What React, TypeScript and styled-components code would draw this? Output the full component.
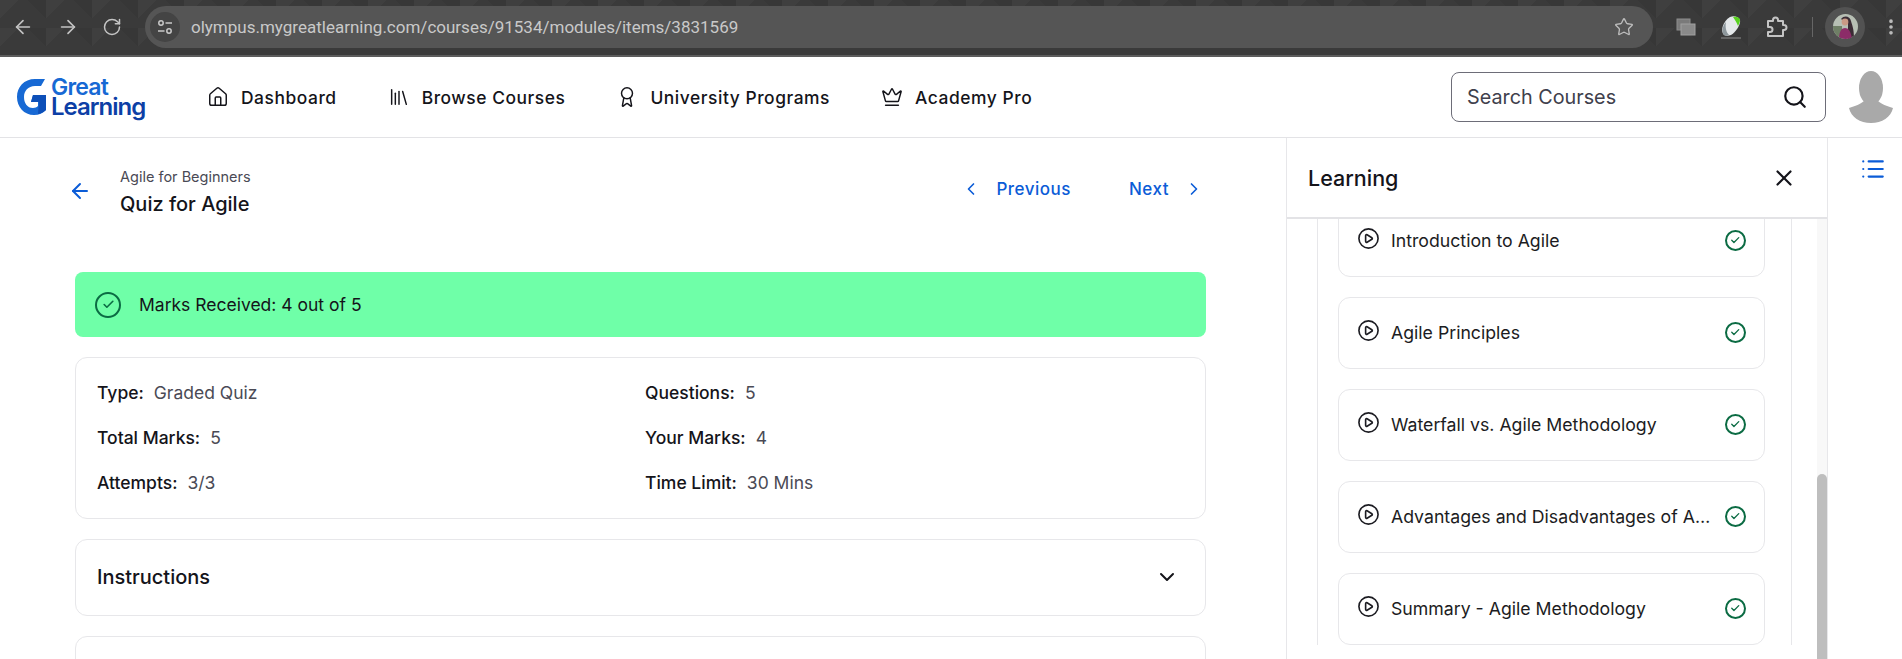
import styled, { createGlobalStyle } from 'styled-components';
import {
  ArrowLeft,
  ArrowRight,
  Award,
  Check,
  ChevronDown,
  ChevronLeft,
  ChevronRight,
  CirclePlay,
  Crown,
  EllipsisVertical,
  House,
  Library,
  List,
  RotateCw,
  Search,
  Star,
  X,
} from 'lucide-react';

const GlobalStyle = createGlobalStyle`
  * { box-sizing: border-box; }
  html, body { margin: 0; padding: 0; background: #fff; }
  body { font-family: Inter, "Liberation Sans", sans-serif; color: #14141a; overflow: hidden; }
`;

const Page = styled.div`
  height: 659px;
  display: flex;
  flex-direction: column;
  overflow: hidden;
`;

const BrowserBar = styled.div`
  height: 57px;
  flex: none;
  display: flex;
  align-items: center;
  padding: 0 14px 2px 12px;
  background-color: #3a3a3a;
  background-image:
    linear-gradient(135deg, rgba(255, 255, 255, 0.025) 25%, transparent 25%),
    linear-gradient(225deg, rgba(0, 0, 0, 0.06) 25%, transparent 25%);
  background-size: 46px 28px;
  border-bottom: 2px solid #5c5c5c;
`;

const NavIcons = styled.div`
  display: flex;
  align-items: center;
  gap: 23px;
  color: #c4c4c4;
  margin-right: 23px;
`;

const AddressBar = styled.div`
  width: 1508px;
  height: 42px;
  flex: none;
  display: flex;
  align-items: center;
  padding: 0 19px 0 5px;
  border-radius: 21px;
  background: #555555;
  color: #c9c9c9;
`;

const SiteBadge = styled.span`
  width: 30px;
  height: 30px;
  border-radius: 50%;
  background: #444444;
  display: flex;
  align-items: center;
  justify-content: center;
  margin-right: 11px;
`;

const Url = styled.span`
  flex: 1;
  font-family: Roboto, sans-serif;
  font-size: 17px;
`;

const Extensions = styled.div`
  flex: 1;
  display: flex;
  align-items: center;
  color: #bdbdbd;
  padding-left: 23px;
  gap: 24px;
`;

const Divider = styled.span`
  width: 1px;
  height: 20px;
  background: #666;
`;

const ProfileRing = styled.span`
  width: 40px;
  height: 40px;
  border-radius: 50%;
  background: #525252;
  display: flex;
  align-items: center;
  justify-content: center;
  margin-left: -12px;
`;

const SiteHeader = styled.header`
  height: 81px;
  flex: none;
  display: flex;
  align-items: center;
  padding: 0 8px 0 16px;
  border-bottom: 1px solid #e3e3e6;
`;

const Logo = styled.div`
  width: 130px;
  display: flex;
  align-items: center;
  gap: 3px;
  margin-right: 61px;
`;

const LogoText = styled.div`
  font-size: 23px;
  font-weight: 600;
  line-height: 20px;
  letter-spacing: -0.8px;
  color: #1769d4;
  & > span { display: block; color: #0d3fa6; font-size: 24px; letter-spacing: -1px; }
`;

const MainNav = styled.nav`
  flex: 1;
  display: flex;
  align-items: center;
`;

const NavItem = styled.a<{ $gap: number }>`
  display: flex;
  align-items: center;
  gap: 12px;
  margin-right: ${props => props.$gap}px;
  font-size: 17.4px;
  font-weight: 500;
  letter-spacing: 0.55px;
  color: #14141a;
`;

const SearchBox = styled.div`
  width: 375px;
  height: 50px;
  display: flex;
  align-items: center;
  justify-content: space-between;
  padding: 0 17px 0 15px;
  border: 1px solid #6d6d78;
  border-radius: 8px;
  font-size: 19.8px;
  color: #40404c;
  margin-right: 22px;
`;

const Body = styled.div`
  flex: 1;
  min-height: 0;
  display: flex;
`;

const Content = styled.main`
  width: 1286px;
  flex: none;
  padding: 29px 80px 0 75px;
`;

const TitleRow = styled.div`
  height: 105px;
  display: flex;
  align-items: flex-start;
`;

const BackLink = styled.span`
  color: #0b5cd7;
  margin: 12px 28px 0 -7px;
  display: flex;
`;

const Crumb = styled.div`
  font-size: 14.5px;
  line-height: 20px;
  color: #4a4a55;
`;

const Title = styled.div`
  font-size: 20px;
  line-height: 28px;
  font-weight: 500;
  margin-top: 3px;
`;

const Pager = styled.div`
  margin-left: auto;
  display: flex;
  align-items: center;
  gap: 58px;
  margin-top: 12px;
  margin-right: 2px;
`;

const PagerLink = styled.a`
  display: flex;
  align-items: center;
  gap: 15px;
  font-size: 17px;
  font-weight: 500;
  letter-spacing: 0.5px;
  color: #0b5cd7;
`;

const Banner = styled.div`
  height: 65px;
  display: flex;
  align-items: center;
  gap: 18px;
  padding: 0 20px;
  border-radius: 8px;
  background: #6fffa8;
  font-size: 17.5px;
  margin-bottom: 20px;
`;

const StatusCircle = styled.span<{ $size: number }>`
  width: ${props => props.$size}px;
  height: ${props => props.$size}px;
  flex: none;
  border: 2px solid #0b6b43;
  border-radius: 50%;
  color: #0b6b43;
  display: flex;
  align-items: center;
  justify-content: center;
`;

const Card = styled.section`
  border: 1px solid #e7e7ea;
  border-radius: 12px;
  margin-bottom: 20px;
`;

const DetailGrid = styled(Card)`
  display: grid;
  grid-template-columns: 548px 1fr;
  row-gap: 21px;
  padding: 23px 20px 23px 21px;
`;

const Detail = styled.div`
  font-size: 17.5px;
  line-height: 24px;
  font-weight: 500;
  & > span { font-weight: 400; color: #4a4a55; margin-left: 10px; }
`;

const AccordionRow = styled(Card)`
  height: 77px;
  display: flex;
  align-items: center;
  justify-content: space-between;
  padding: 0 26px 2px 21px;
  font-size: 20px;
  font-weight: 500;
`;

const EmptyCard = styled(Card)`
  height: 80px;
`;

const Sidebar = styled.aside`
  width: 542px;
  flex: none;
  display: flex;
  flex-direction: column;
  border-left: 1px solid #e7e7ea;
  border-right: 1px solid #e7e7ea;
  min-height: 0;
`;

const SidebarHead = styled.div`
  height: 81px;
  flex: none;
  display: flex;
  align-items: center;
  justify-content: space-between;
  padding: 0 30px 0 21px;
  border-bottom: 2px solid #e3e3e6;
  font-size: 21.5px;
  font-weight: 500;
`;

const SidebarBody = styled.div`
  flex: 1;
  min-height: 0;
  position: relative;
  overflow: hidden;
  padding-left: 30px;
`;

const ModulePanel = styled.div`
  width: 475px;
  height: 100%;
  border-left: 1px solid #e7e7ea;
  border-right: 1px solid #e7e7ea;
  padding: 0 26px 0 20px;
`;

const ItemList = styled.div`
  margin-top: -14px;
  display: flex;
  flex-direction: column;
  gap: 20px;
`;

const Item = styled.div`
  height: 72px;
  display: flex;
  align-items: center;
  gap: 11px;
  padding: 0 18px 2px;
  border: 1px solid #e7e7ea;
  border-radius: 12px;
  font-size: 17.7px;
  color: #1c1c22;
`;

const ItemName = styled.span`
  flex: 1;
  min-width: 0;
  white-space: nowrap;
  overflow: hidden;
  text-overflow: ellipsis;
`;

const PlayIcon = styled.span`
  display: flex;
  margin-top: -4px;
`;

const ScrollTrack = styled.div`
  position: absolute;
  top: 0;
  right: 0;
  bottom: 0;
  width: 10px;
  background: #f8f8f8;
`;

const ScrollThumb = styled.div`
  position: absolute;
  top: 255px;
  left: 0;
  right: 0;
  bottom: 0;
  border-radius: 5px 5px 0 0;
  background: #bebebe;
`;

const Rail = styled.div`
  flex: 1;
  display: flex;
  justify-content: center;
  padding: 18px 0 0 15px;
  color: #0b5cd7;
`;

const lessons = [
  'Introduction to Agile',
  'Agile Principles',
  'Waterfall vs. Agile Methodology',
  'Advantages and Disadvantages of Agile Methodology',
  'Summary - Agile Methodology',
];

const details = [
  ['Type:', 'Graded Quiz'],
  ['Questions:', '5'],
  ['Total Marks:', '5'],
  ['Your Marks:', '4'],
  ['Attempts:', '3/3'],
  ['Time Limit:', '30 Mins'],
];

function SiteSettingsIcon() {
  return (
    <svg width="18" height="18" viewBox="0 0 18 18" fill="none" stroke="#c9c9c9" strokeWidth="1.5">
      <circle cx="5" cy="5" r="2.2" />
      <path d="M9.5 5H16" />
      <path d="M2 13h6.5" />
      <circle cx="13" cy="13" r="2.2" />
    </svg>
  );
}

function LogoMark() {
  return (
    <svg width="32" height="40" viewBox="0 0 32 40">
      <path d="M29 2H19C8 2 1 10 1 20s7 18 17 18c5 0 9-2 12-5V18H17l-2 7h7v4c-1 1-3 2-5 2-6 0-9-5-9-11s4-11 11-11h6z" fill="#1769d4" />
      <path d="M17 18h13v15c-2 2-4 3-8 4l1-12h-8z" fill="#0d4fb8" />
    </svg>
  );
}

function TabSearchIcon() {
  return (
    <svg width="20" height="18" viewBox="0 0 20 18">
      <rect x="1" y="1" width="13" height="11" fill="#7a7a7a" stroke="#8d8d8d" />
      <rect x="5" y="6" width="14" height="11" fill="#8a8a8a" stroke="#a0a0a0" />
    </svg>
  );
}

function MouseExtensionIcon() {
  return (
    <svg width="22" height="24" viewBox="0 0 22 24">
      <path d="M4 20C0 16 3 6 10 2c4-2 9 0 10 3 1 4-4 12-9 15-3 1-5 1-7 0z" fill="#e4e8ea" />
      <path d="M13 2c4-1 7 1 7 3s-1 4-2 6c-1-3-3-6-5-9z" fill="#58d11f" />
      <path d="M4 20c-3-4-1-10 2-13-1 5 0 10 3 13-2 1-4 1-5 0z" fill="#8d979c" />
      <path d="M1 23h20" stroke="#8d8d8d" />
    </svg>
  );
}

function PuzzleIcon() {
  return (
    <svg width="22" height="22" viewBox="0 0 22 22" fill="none" stroke="#c4c4c4" strokeWidth="2" strokeLinejoin="round">
      <path d="M2 5h5V4a2.5 2.5 0 0 1 5 0v1h5v4h1a2.5 2.5 0 0 1 0 5h-1v6H2v-4h2a2.5 2.5 0 0 0 0-5H2z" />
    </svg>
  );
}

function ProfilePhoto() {
  return (
    <svg width="25" height="25" viewBox="0 0 25 25">
      <clipPath id="profile-clip"><circle cx="12.5" cy="12.5" r="12.5" /></clipPath>
      <g clipPath="url(#profile-clip)">
        <rect width="25" height="25" fill="#b7bfb4" />
        <rect x="0" y="12" width="9" height="13" fill="#6f7f66" />
        <path d="M8 5c3-4 9-3 10 2 1 4 3 7 3 18H15V10z" fill="#3b2c35" />
        <circle cx="12" cy="8" r="3.4" fill="#c99a85" />
        <path d="M6 25c0-8 3-11 6-11s6 3 7 11z" fill="#8c2c68" />
      </g>
    </svg>
  );
}

function AvatarIcon() {
  return (
    <svg width="46" height="54" viewBox="0 0 46 54" fill="#a9a9a9">
      <ellipse cx="23" cy="18" rx="12" ry="17" />
      <path d="M1 38c6-2 12-4 15-7h14c3 3 9 5 15 7-2 9-11 15-22 15S3 47 1 38z" />
    </svg>
  );
}

function DoneBadge({ size }: { size: number }) {
  return (
    <StatusCircle $size={size}>
      <Check size={size / 2} strokeWidth={3} />
    </StatusCircle>
  );
}

export default function App(): JSX.Element {
  return (
    <Page>
      <GlobalStyle />
      <BrowserBar>
        <NavIcons>
          <ArrowLeft size={22} strokeWidth={1.8} />
          <ArrowRight size={22} strokeWidth={1.8} />
          <RotateCw size={20} strokeWidth={1.8} />
        </NavIcons>
        <AddressBar>
          <SiteBadge><SiteSettingsIcon /></SiteBadge>
          <Url>olympus.mygreatlearning.com/courses/91534/modules/items/3831569</Url>
          <Star size={20} strokeWidth={1.6} color="#bdbdbd" />
        </AddressBar>
        <Extensions>
          <TabSearchIcon />
          <MouseExtensionIcon />
          <PuzzleIcon />
          <Divider />
          <ProfileRing><ProfilePhoto /></ProfileRing>
          <EllipsisVertical size={20} strokeWidth={2.4} style={{ marginLeft: -8 }} />
        </Extensions>
      </BrowserBar>

      <SiteHeader>
        <Logo>
          <LogoMark />
          <LogoText>Great<span>Learning</span></LogoText>
        </Logo>
        <MainNav>
          <NavItem $gap={51}><House size={22} strokeWidth={1.6} />Dashboard</NavItem>
          <NavItem $gap={51}><Library size={22} strokeWidth={1.6} />Browse Courses</NavItem>
          <NavItem $gap={51}><Award size={22} strokeWidth={1.6} />University Programs</NavItem>
          <NavItem $gap={0}><Crown size={22} strokeWidth={1.6} />Academy Pro</NavItem>
        </MainNav>
        <SearchBox>
          Search Courses
          <Search size={26} strokeWidth={2} color="#14141a" />
        </SearchBox>
        <AvatarIcon />
      </SiteHeader>

      <Body>
        <Content>
          <TitleRow>
            <BackLink><ArrowLeft size={24} strokeWidth={2} /></BackLink>
            <div>
              <Crumb>Agile for Beginners</Crumb>
              <Title>Quiz for Agile</Title>
            </div>
            <Pager>
              <PagerLink><ChevronLeft size={20} strokeWidth={2} />Previous</PagerLink>
              <PagerLink>Next<ChevronRight size={20} strokeWidth={2} /></PagerLink>
            </Pager>
          </TitleRow>
          <Banner>
            <DoneBadge size={26} />
            Marks Received: 4 out of 5
          </Banner>
          <DetailGrid>
            {details.map(([label, value]) => (
              <Detail key={label}>{label}<span>{value}</span></Detail>
            ))}
          </DetailGrid>
          <AccordionRow>
            Instructions
            <ChevronDown size={24} strokeWidth={2} />
          </AccordionRow>
          <EmptyCard />
        </Content>

        <Sidebar>
          <SidebarHead>
            Learning
            <X size={26} strokeWidth={2} />
          </SidebarHead>
          <SidebarBody>
            <ModulePanel>
              <ItemList>
                {lessons.map((name) => (
                  <Item key={name}>
                    <PlayIcon><CirclePlay size={23} strokeWidth={1.7} /></PlayIcon>
                    <ItemName>{name}</ItemName>
                    <DoneBadge size={21} />
                  </Item>
                ))}
              </ItemList>
            </ModulePanel>
            <ScrollTrack><ScrollThumb /></ScrollTrack>
          </SidebarBody>
        </Sidebar>

        <Rail><List size={26} strokeWidth={2} /></Rail>
      </Body>
    </Page>
  );
}
